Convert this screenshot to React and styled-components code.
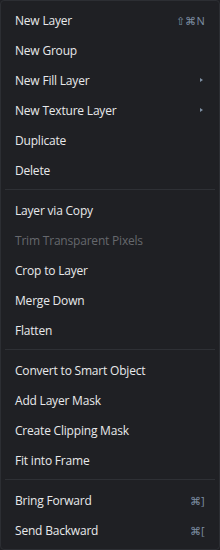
import React from 'react';
import styled, { createGlobalStyle } from 'styled-components';

const GlobalStyle = createGlobalStyle`
  html, body {
    margin: 0;
    padding: 0;
    background: #1f2024;
  }
`;

const Menu = styled.div`
  box-sizing: border-box;
  width: 220px;
  height: 550px;
  padding: 4px 0 5px;
  background: #1f2024;
  border: 1px solid #2c2e33;
  border-radius: 4px;
  display: flex;
  flex-direction: column;
  font-family: "Open Sans", "Noto Sans", sans-serif;
`;

const Item = styled.div`
  height: 30px;
  flex-shrink: 0;
  display: flex;
  align-items: center;
  justify-content: space-between;
  padding: 0 14px;
  font-size: 12px;
  letter-spacing: -0.2px;
  color: ${(props) => (props.disabled ? '#66686d' : '#e8e9eb')};
`;

const Shortcut = styled.span`
  font-size: 11px;
  color: #7d8ea2;
  letter-spacing: 0.3px;
`;

const Arrow = styled.span`
  width: 0;
  height: 0;
  margin-right: 2px;
  border-top: 2.5px solid transparent;
  border-bottom: 2.5px solid transparent;
  border-left: 3px solid #7d8ea2;
`;

const Separator = styled.div`
  height: 1px;
  flex-shrink: 0;
  margin: 4px 4px 5px;
  background: #2e3035;
`;

const sections = [
  [
    { label: 'New Layer', shortcut: '⇧⌘N' },
    { label: 'New Group' },
    { label: 'New Fill Layer', sub: true },
    { label: 'New Texture Layer', sub: true },
    { label: 'Duplicate' },
    { label: 'Delete' },
  ],
  [
    { label: 'Layer via Copy' },
    { label: 'Trim Transparent Pixels', disabled: true },
    { label: 'Crop to Layer' },
    { label: 'Merge Down' },
    { label: 'Flatten' },
  ],
  [
    { label: 'Convert to Smart Object' },
    { label: 'Add Layer Mask' },
    { label: 'Create Clipping Mask' },
    { label: 'Fit into Frame' },
  ],
  [
    { label: 'Bring Forward', shortcut: '⌘]' },
    { label: 'Send Backward', shortcut: '⌘[' },
  ],
];

export default function App() {
  return (
    <>
      <GlobalStyle />
      <Menu>
        {sections.map((items, i) => (
          <React.Fragment key={i}>
            {i > 0 && <Separator />}
            {items.map((item) => (
              <Item key={item.label} disabled={item.disabled}>
                <span>{item.label}</span>
                {item.shortcut && <Shortcut>{item.shortcut}</Shortcut>}
                {item.sub && <Arrow />}
              </Item>
            ))}
          </React.Fragment>
        ))}
      </Menu>
    </>
  );
}
